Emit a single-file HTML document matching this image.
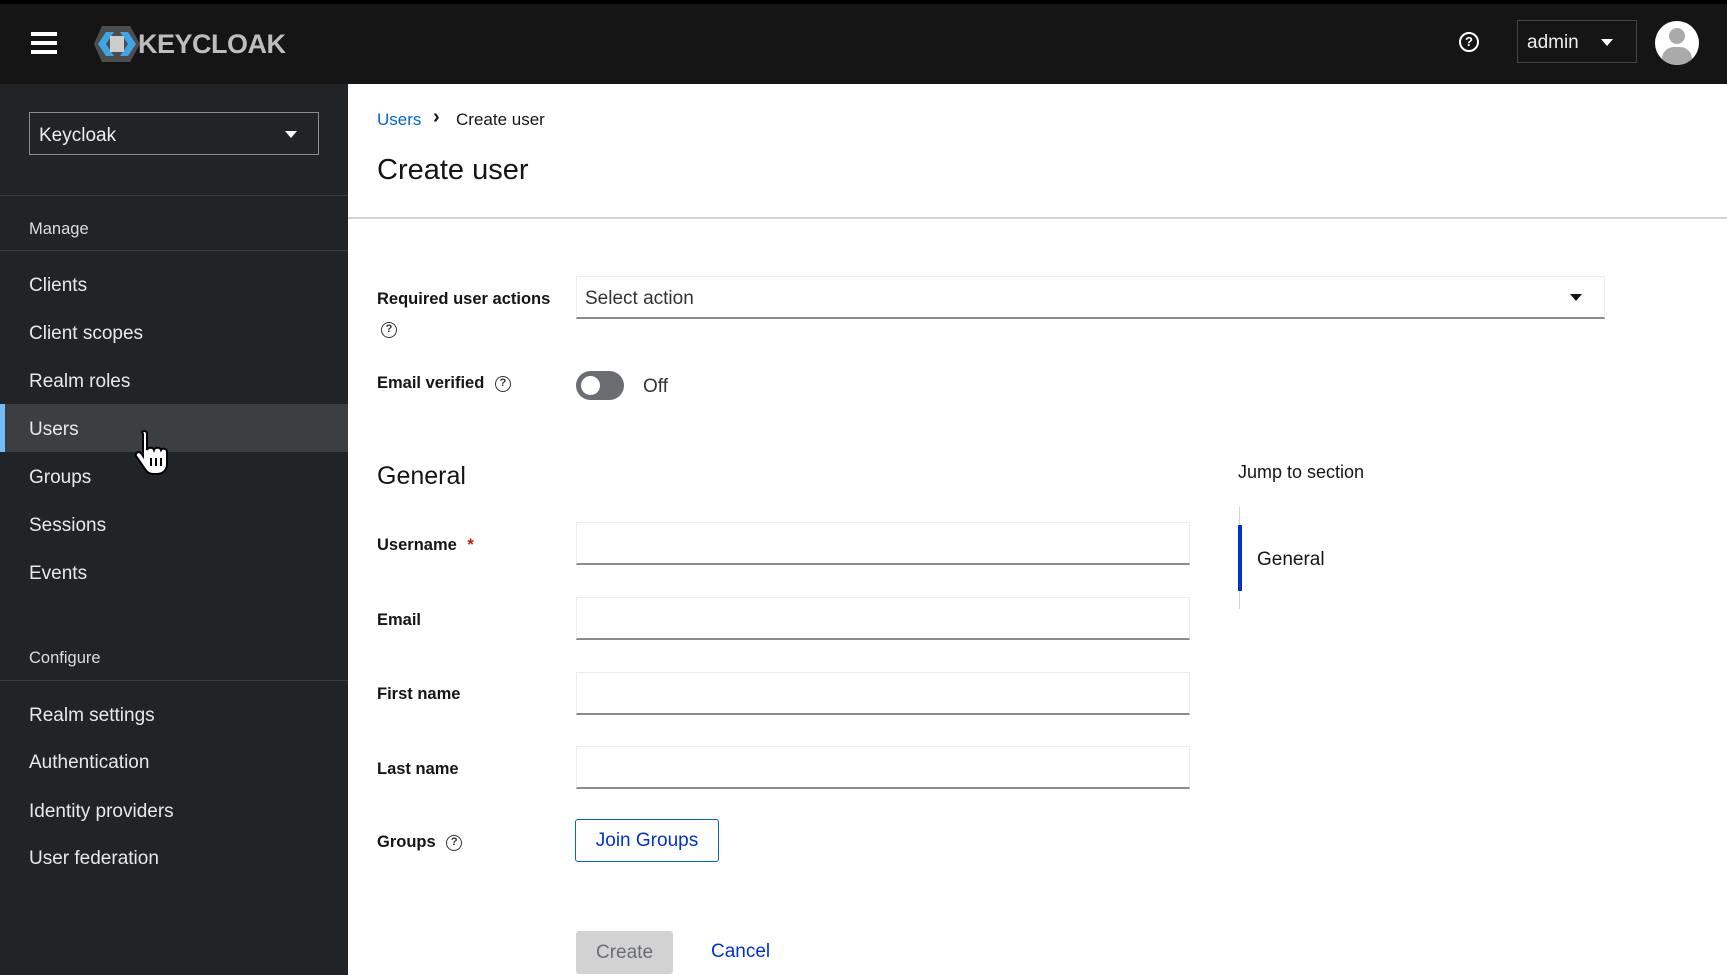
<!DOCTYPE html>
<html><head><meta charset="utf-8"><style>
*{box-sizing:border-box;margin:0;padding:0}
body{width:1727px;height:975px;overflow:hidden;background:#fff;font-family:"Liberation Sans",sans-serif;position:relative}
.a{position:absolute}
.hdr{left:0;top:0;width:1727px;height:84px;background:#151515;border-top:4px solid #000}
.side{left:0;top:84px;width:348px;height:891px;background:#212427}
.nav{position:absolute;left:29px;color:#e8e8e8;font-size:19px;line-height:24px}
.sec{position:absolute;left:29px;color:#ddd;font-size:16.5px}
.dv{position:absolute;left:0;width:348px;height:1px;background:#3a3d40}
.lbl{position:absolute;left:377px;font-weight:bold;font-size:16.5px;color:#151515}
.inp{position:absolute;left:576px;width:614px;height:43px;border:1px solid #ececec;border-bottom:2px solid #8a8d90;background:#fff}
.q{display:inline-block;width:16px;height:16px;border:1.6px solid #333;border-radius:50%;font-size:11px;text-align:center;line-height:13px;font-weight:bold;color:#333;vertical-align:middle}
</style></head><body>
<div class="a hdr"></div>
<div class="a" style="left:31px;top:32px;width:26px;height:4px;background:#fff;box-shadow:0 9px 0 #fff,0 18px 0 #fff"></div>
<svg class="a" style="left:92px;top:24px" width="50" height="40" viewBox="0 0 50 40"><polygon points="10,2 38,2 48,20 38,38 10,38 2,20" fill="#4d4d4d"/><polygon points="6,20 14,8 22,8 14,20 22,32 14,32" fill="#3ba7e6"/><polygon points="44,20 36,8 28,8 36,20 28,32 36,32" fill="#3ba7e6"/><rect x="18" y="12" width="14" height="16" fill="#ccc"/></svg>
<div class="a" style="left:138px;top:29px;color:#bdbdbd;font-size:27px;font-weight:bold;letter-spacing:-0.5px">KEYCLOAK</div>
<div class="a" style="left:1459px;top:32px;width:20px;height:20px;border:2px solid #fff;border-radius:50%;color:#fff;font-size:13px;font-weight:bold;text-align:center;line-height:16px">?</div>
<div class="a" style="left:1517px;top:20px;width:120px;height:43px;border:1px solid #444"></div>
<div class="a" style="left:1527px;top:32px;color:#eee;font-size:19px">admin</div>
<div class="a" style="left:1601px;top:39px;border-left:6px solid transparent;border-right:6px solid transparent;border-top:7px solid #fff"></div>
<div class="a" style="left:1655px;top:21px;width:44px;height:44px;border-radius:50%;background:#fff;overflow:hidden"><div class="a" style="left:14px;top:7px;width:16px;height:16px;border-radius:50%;background:#aaa"></div><div class="a" style="left:7px;top:26px;width:30px;height:24px;border-radius:12px 12px 0 0;background:#aaa"></div></div>

<div class="a side"></div>
<div class="a" style="left:29px;top:112px;width:290px;height:43px;border:1px solid #8a8d90"></div>
<div class="a" style="left:39px;top:125px;color:#eee;font-size:19px">Keycloak</div>
<div class="a" style="left:285px;top:131px;border-left:6px solid transparent;border-right:6px solid transparent;border-top:7px solid #fff"></div>
<div class="dv" style="top:195px"></div>
<div class="sec" style="top:220px">Manage</div>
<div class="dv" style="top:250px"></div>
<div class="a" style="left:0;top:404px;width:348px;height:48px;background:#3c3f42"></div>
<div class="a" style="left:0;top:404px;width:5px;height:48px;background:#73bcf7"></div>
<div class="nav" style="top:274px">Clients</div>
<div class="nav" style="top:322px">Client scopes</div>
<div class="nav" style="top:370px">Realm roles</div>
<div class="nav" style="top:418px">Users</div>
<div class="nav" style="top:466px">Groups</div>
<div class="nav" style="top:514px">Sessions</div>
<div class="nav" style="top:562px">Events</div>
<div class="sec" style="top:649px">Configure</div>
<div class="dv" style="top:680px"></div>
<div class="nav" style="top:704px">Realm settings</div>
<div class="nav" style="top:751px">Authentication</div>
<div class="nav" style="top:800px">Identity providers</div>
<div class="nav" style="top:847px">User federation</div>
<svg class="a" style="left:132px;top:428px" width="40" height="48" viewBox="0 0 40 48"><path d="M10 4c2-2 5-1 5 2v16c1-3 6-3 7 0 1-3 6-3 7 0 1-2 6-2 6 2v12c0 6-4 10-10 10h-4c-4 0-6-2-8-5L4 28c-1-3 2-5 5-3l2 3V6z" fill="#fff" stroke="#000" stroke-width="2"/><path d="M19 30v8M24 30v8M29 30v8" stroke="#000" stroke-width="2"/></svg>

<div class="a" style="left:377px;top:110px;font-size:17px;color:#0066cc">Users</div>
<div class="a" style="left:433px;top:106px;font-size:20px;color:#151515;font-weight:bold">›</div>
<div class="a" style="left:456px;top:110px;font-size:17px;color:#151515">Create user</div>
<div class="a" style="left:377px;top:154px;font-size:29px;color:#151515">Create user</div>
<div class="a" style="left:348px;top:217px;width:1379px;height:2px;background:#d2d2d2"></div>

<div class="lbl" style="top:290px">Required user actions</div>
<div class="a" style="left:381px;top:321px"><span class="q">?</span></div>
<div class="a" style="left:576px;top:276px;width:1029px;height:43px;border:1px solid #ececec;border-bottom:2px solid #8a8d90"></div>
<div class="a" style="left:585px;top:288px;font-size:19px;color:#333">Select action</div>
<div class="a" style="left:1570px;top:294px;border-left:6px solid transparent;border-right:6px solid transparent;border-top:7px solid #151515"></div>
<div class="lbl" style="top:374px">Email verified <span class="q" style="margin-left:6px">?</span></div>
<div class="a" style="left:576px;top:371px;width:48px;height:29px;border-radius:15px;background:#6a6e73"></div>
<div class="a" style="left:581px;top:376px;width:19px;height:19px;border-radius:50%;background:#fff"></div>
<div class="a" style="left:643px;top:376px;font-size:19px;color:#333">Off</div>

<div class="a" style="left:377px;top:462px;font-size:25px;color:#151515">General</div>
<div class="a" style="left:1238px;top:462px;font-size:18px;color:#151515">Jump to section</div>
<div class="a" style="left:1239px;top:507px;width:1px;height:102px;background:#d2d2d2"></div>
<div class="a" style="left:1238px;top:525px;width:4px;height:66px;background:#0033cc"></div>
<div class="a" style="left:1257px;top:549px;font-size:19px;color:#151515">General</div>

<div class="lbl" style="top:536px">Username <span style="color:#c9190b;margin-left:6px">*</span></div>
<div class="inp" style="top:522px"></div>
<div class="lbl" style="top:611px">Email</div>
<div class="inp" style="top:597px"></div>
<div class="lbl" style="top:685px">First name</div>
<div class="inp" style="top:672px"></div>
<div class="lbl" style="top:760px">Last name</div>
<div class="inp" style="top:746px"></div>
<div class="lbl" style="top:833px">Groups <span class="q" style="margin-left:6px">?</span></div>
<div class="a" style="left:575px;top:819px;width:144px;height:43px;border:1.5px solid #0066cc;border-radius:3px;color:#0033cc;font-size:19px;text-align:center;line-height:42px">Join Groups</div>
<div class="a" style="left:576px;top:931px;width:97px;height:43px;background:#d2d2d2;border-radius:3px;color:#6a6e73;font-size:19px;text-align:center;line-height:43px">Create</div>
<div class="a" style="left:711px;top:941px;font-size:19px;color:#0033cc">Cancel</div>
</body></html>
